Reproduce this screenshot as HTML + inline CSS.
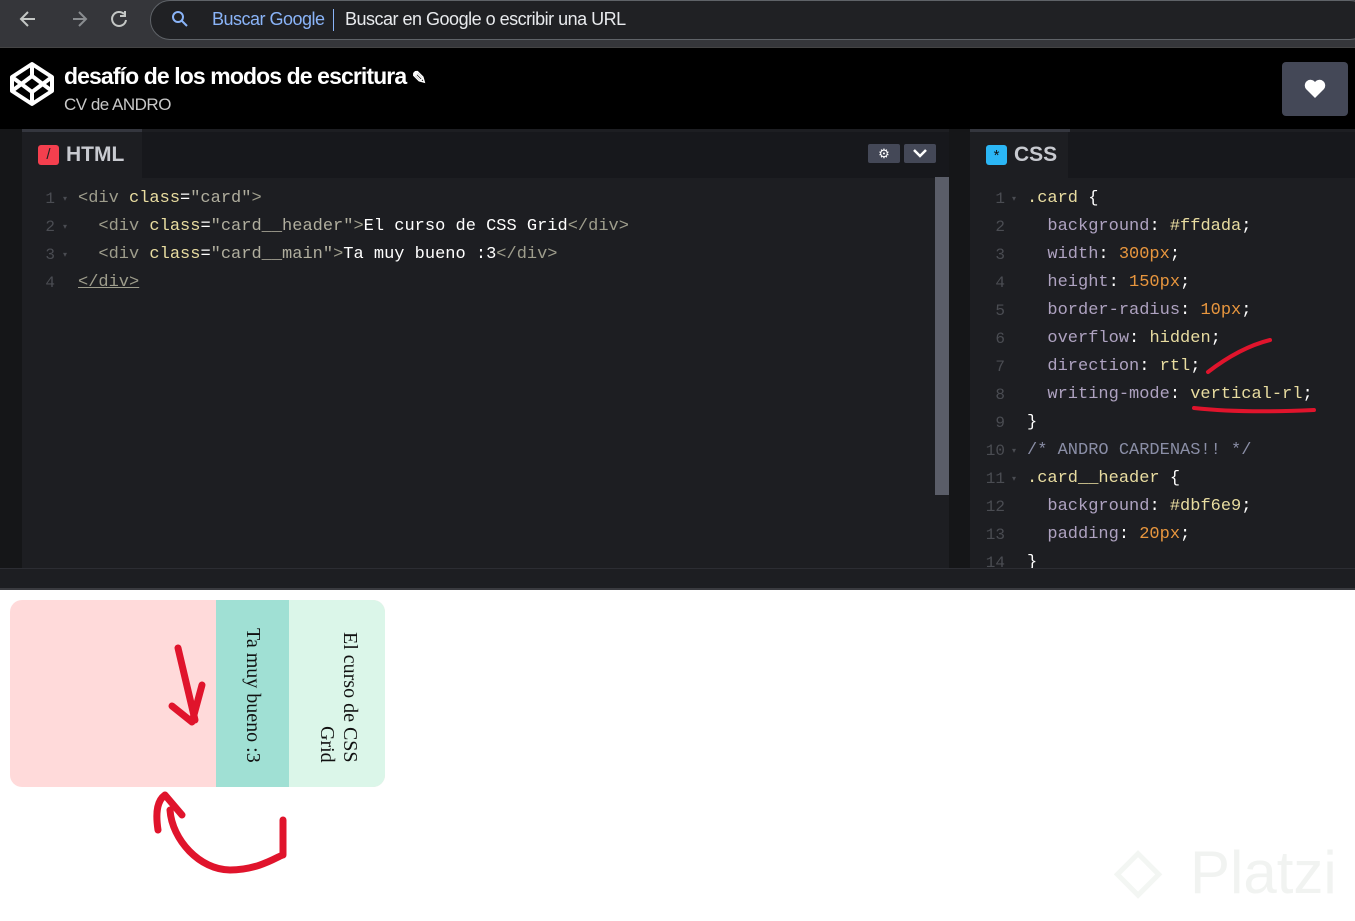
<!DOCTYPE html>
<html><head><meta charset="utf-8"><style>
*{margin:0;padding:0;box-sizing:border-box}
body{width:1355px;height:921px;overflow:hidden;background:#fff;font-family:"Liberation Sans",sans-serif;position:relative}
.abs{position:absolute}
.top{left:0;top:0;width:1355px;height:48px;background:#35363a;border-bottom:1px solid #444}
.url{left:150px;top:0;width:1220px;height:40px;border:1.5px solid #5f6368;border-radius:20px;background:#202124}
.hdr{left:0;top:48px;width:1355px;height:81px;background:#000}
.ed{left:0;top:129px;width:1355px;height:440px;background:#151618}
.pane{background:#1d1e22}
.code{font-family:"Liberation Mono",monospace;font-size:17px;line-height:28px;white-space:pre;color:#fff}
.num{font-family:"Liberation Mono",monospace;font-size:16px;line-height:28px;white-space:pre;color:#4a4c52;text-align:right}
.arr{font-family:"DejaVu Sans",sans-serif;font-size:8px;line-height:28px;white-space:pre;color:#4a4c52}
.t{color:#9e9d8c}.a{color:#e8dca0}.s{color:#b0ae9e}
.p{color:#aea2c0}.v{color:#e8dca0}.n{color:#e8963e}.c{color:#8a8ea6}
</style></head><body>
<div class="abs top"></div>
<div class="abs url"></div>
<svg class="abs" style="left:18px;top:8px" width="120" height="24" viewBox="0 0 120 24" fill="none" stroke="#c4c7c5" stroke-width="2">
<path d="M17 11H4M10 4l-7 7 7 7"/><path d="M55 11H67M61 4l7 7-7 7" stroke="#8a8d90"/>
<path d="M106 6a7 7 0 1 0 2 6M107 3v5h-5"/></svg>
<svg class="abs" style="left:171px;top:10px" width="18" height="18" fill="none" stroke="#8ab4f8" stroke-width="2"><circle cx="7" cy="7" r="5"/><path d="M11 11l5 5"/></svg>
<div class="abs" style="left:212px;top:9px;font-size:18px;color:#8ab4f8;letter-spacing:-0.5px">Buscar Google</div>
<div class="abs" style="left:333px;top:9px;width:1px;height:22px;background:#8ab4f8"></div>
<div class="abs" style="left:345px;top:9px;font-size:18px;color:#e8eaed;letter-spacing:-0.5px">Buscar en Google o escribir una URL</div>
<div class="abs hdr"></div>
<svg class="abs" style="left:9px;top:61px" width="46" height="46" viewBox="0 0 46 46" fill="none" stroke="#fff" stroke-width="4" stroke-linejoin="round"><path d="M23 3L43 16V30L23 43L3 30V16Z"/><path d="M23 3V15M23 31V43M3 16L23 31L43 16M3 30L23 15L43 30"/></svg>
<div class="abs" style="left:64px;top:63px;font-size:23px;font-weight:bold;color:#fff;letter-spacing:-0.9px">desafío de los modos de escritura <span style="font-size:18px">✎</span></div>
<div class="abs" style="left:64px;top:95px;font-size:17px;color:#c8c8c8;letter-spacing:-0.5px">CV de ANDRO</div>
<div class="abs" style="left:1282px;top:62px;width:66px;height:54px;background:#444857;border-radius:4px"></div>
<svg class="abs" style="left:1304px;top:79px" width="22" height="20" viewBox="0 0 22 20"><path d="M11 19L2 10A5 5 0 0 1 11 3A5 5 0 0 1 20 10Z" fill="#fff"/></svg>
<div class="abs ed"></div>
<div class="abs pane" style="left:22px;top:129px;width:927px;height:440px"></div>
<div class="abs" style="left:22px;top:129px;width:120px;height:3px;background:#34363e"></div>
<div class="abs pane" style="left:970px;top:129px;width:385px;height:440px"></div>
<div class="abs" style="left:970px;top:129px;width:100px;height:3px;background:#34363e"></div>
<div class="abs" style="left:142px;top:132px;width:807px;height:46px;background:#17181c"></div>
<div class="abs" style="left:1068px;top:132px;width:287px;height:46px;background:#17181c"></div>
<div class="abs" style="left:38px;top:145px;width:21px;height:20px;background:#f43f4e;border-radius:3px;color:#222;font-size:15px;text-align:center;line-height:20px">/</div>
<div class="abs" style="left:66px;top:143px;font-size:21px;font-weight:bold;color:#c8cad0">HTML</div>
<div class="abs" style="left:986px;top:145px;width:21px;height:20px;background:#2bb6f5;border-radius:3px;color:#111;font-size:15px;text-align:center;line-height:22px">*</div>
<div class="abs" style="left:1014px;top:143px;font-size:21px;font-weight:bold;color:#c8cad0">CSS</div>
<div class="abs" style="left:868px;top:144px;width:32px;height:19px;background:#444857;border-radius:2px;color:#fff;font-size:13px;text-align:center;line-height:19px">⚙</div>
<div class="abs" style="left:904px;top:144px;width:32px;height:19px;background:#444857;border-radius:2px"></div>
<svg class="abs" style="left:912px;top:148px" width="16" height="10"><path d="M2 2l6 6 6-6" stroke="#fff" stroke-width="2.5" fill="none"/></svg>
<div class="abs" style="left:935px;top:177px;width:14px;height:318px;background:#5a5d68"></div>

<div class="abs num" style="left:30px;top:185px;width:25px">1
2
3
4</div>
<div class="abs arr" style="left:63px;top:185px">▾
▾
▾</div>
<div class="abs code" style="left:78px;top:185px"><span class="t">&lt;div</span> <span class="a">class</span>=<span class="s">"card"</span><span class="t">&gt;</span>
  <span class="t">&lt;div</span> <span class="a">class</span>=<span class="s">"card__header"</span><span class="t">&gt;</span>El curso de CSS Grid<span class="t">&lt;/div&gt;</span>
  <span class="t">&lt;div</span> <span class="a">class</span>=<span class="s">"card__main"</span><span class="t">&gt;</span>Ta muy bueno :3<span class="t">&lt;/div&gt;</span>
<span class="t" style="text-decoration:underline">&lt;/div&gt;</span></div>

<div class="abs num" style="left:975px;top:185px;width:30px;height:383px;overflow:hidden">1
2
3
4
5
6
7
8
9
10
11
12
13
14</div>
<div class="abs arr" style="left:1012px;top:185px">▾








▾
▾</div>
<div class="abs code" style="left:1027px;top:185px;height:383px;overflow:hidden"><span class="a">.card</span> {
  <span class="p">background</span>: <span class="v">#ffdada</span>;
  <span class="p">width</span>: <span class="n">300px</span>;
  <span class="p">height</span>: <span class="n">150px</span>;
  <span class="p">border-radius</span>: <span class="n">10px</span>;
  <span class="p">overflow</span>: <span class="v">hidden</span>;
  <span class="p">direction</span>: <span class="v">rtl</span>;
  <span class="p">writing-mode</span>: <span class="v">vertical-rl</span>;
}
<span class="c">/* ANDRO CARDENAS!! */</span>
<span class="a">.card__header</span> {
  <span class="p">background</span>: <span class="v">#dbf6e9</span>;
  <span class="p">padding</span>: <span class="n">20px</span>;
}</div>
<div class="abs" style="left:0;top:568px;width:1355px;height:22px;background:#1d1e22;border-top:1px solid #2c2d33;border-bottom:2px solid #3a3b40"></div>
<svg class="abs" style="left:1200px;top:330px" width="120" height="60"><path d="M8 42C30 25 50 15 70 10" stroke="#e0142c" stroke-width="4" fill="none" stroke-linecap="round"/></svg>
<svg class="abs" style="left:1190px;top:400px" width="130" height="20"><path d="M4 8C40 12 80 12 124 10" stroke="#e0142c" stroke-width="4" fill="none" stroke-linecap="round"/></svg>
<div class="abs" style="left:10px;top:600px;width:375px;height:187px;background:#ffdada;border-radius:12px;overflow:hidden">
<div class="abs" style="left:206px;top:0;width:73px;height:187px;background:#a0e0d4"></div>
<div class="abs" style="left:279px;top:0;width:96px;height:187px;background:#dbf6e9"></div>
<div class="abs" style="left:226px;top:24px;height:139px;writing-mode:vertical-rl;direction:rtl;font-family:'Liberation Serif',serif;font-size:20px;line-height:33px;color:#111">Ta muy bueno :3</div>
<div class="abs" style="left:303px;top:24px;width:48px;height:139px;writing-mode:vertical-rl;direction:rtl;font-family:'Liberation Serif',serif;font-size:20px;line-height:23px;color:#111">El curso de CSS Grid</div>
</div>
<svg class="abs" style="left:150px;top:640px" width="150" height="240" fill="none" stroke="#e0142c" stroke-width="7" stroke-linecap="round" stroke-linejoin="round">
<path d="M28 8L45 80M22 66L42 82L52 45"/>
<path d="M8 190C5 170 8 160 15 155L32 175M20 170C22 200 50 230 80 230C110 230 130 215 133 215V180"/></svg>
<div class="abs" style="left:1115px;top:835px;font-size:60px;color:#f3f6f3;font-weight:bold">◇</div>
<div class="abs" style="left:1190px;top:838px;font-size:60px;color:#f1f3f1">Platzi</div>
</body></html>
